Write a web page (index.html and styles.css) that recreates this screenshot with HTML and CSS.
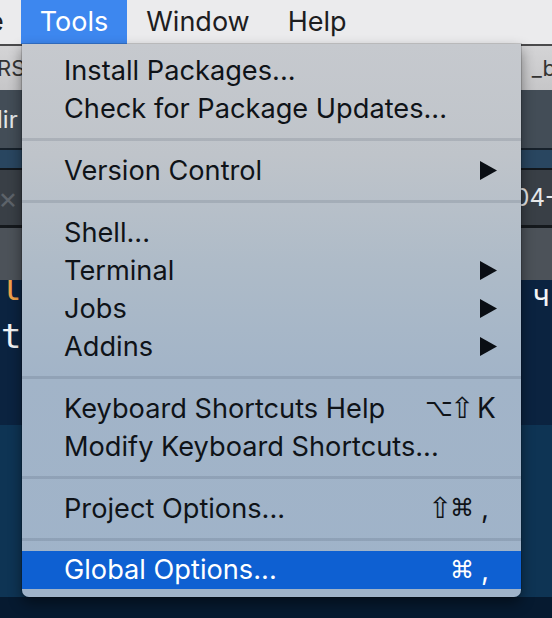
FILE: index.html
```html
<!DOCTYPE html>
<html>
<head>
<meta charset="utf-8">
<link rel="stylesheet" href="styles.css">
</head>
<body>
<div class="screen">
  <div class="menubar">
    <span class="mb-item mb-cut">e</span>
    <span class="mb-item mb-active">Tools</span>
    <span class="mb-item">Window</span>
    <span class="mb-item">Help</span>
  </div>
  <div class="bg">
    <div class="row r-line1"></div>
    <div class="row r-tabs"><span class="edge-l t-dark">RS</span><span class="edge-r t-dark">_b</span></div>
    <div class="row r-tool"><span class="edge-l t-light">lir</span></div>
    <div class="row r-line2"></div>
    <div class="row r-blue"></div>
    <div class="row r-line3"></div>
    <div class="row r-tab2"><span class="edge-l t-x">×</span><span class="edge-r t-light">04-</span></div>
    <div class="row r-line4"></div>
    <div class="row r-grey"></div>
    <div class="row r-code">
      <div class="code-l"><span class="c-orange">l</span><span class="c-white">t</span></div>
      <div class="code-r"><span class="c-white">ч</span></div>
    </div>
    <div class="row r-active"></div>
    <div class="row r-bottom"></div>
  </div>

  <div class="menu">
    <div class="item"><span class="label">Install Packages...</span></div>
    <div class="item"><span class="label">Check for Package Updates...</span></div>
    <div class="sep"></div>
    <div class="item"><span class="label">Version Control</span><svg class="arrow" viewBox="0 0 17 19"><polygon points="0,0 17,9.5 0,19"/></svg></div>
    <div class="sep"></div>
    <div class="item"><span class="label">Shell...</span></div>
    <div class="item"><span class="label">Terminal</span><svg class="arrow" viewBox="0 0 17 19"><polygon points="0,0 17,9.5 0,19"/></svg></div>
    <div class="item"><span class="label">Jobs</span><svg class="arrow" viewBox="0 0 17 19"><polygon points="0,0 17,9.5 0,19"/></svg></div>
    <div class="item"><span class="label">Addins</span><svg class="arrow" viewBox="0 0 17 19"><polygon points="0,0 17,9.5 0,19"/></svg></div>
    <div class="sep"></div>
    <div class="item"><span class="label">Keyboard Shortcuts Help</span><span class="sc"><span class="mods"><span class="m-opt">⌥</span><span class="m-shift">⇧</span></span><span class="key">K</span></span></div>
    <div class="item"><span class="label">Modify Keyboard Shortcuts...</span></div>
    <div class="sep"></div>
    <div class="item"><span class="label">Project Options...</span><span class="sc"><span class="mods"><span class="m-shift">⇧</span><span class="m-cmd">⌘</span></span><span class="key key-comma">,</span></span></div>
    <div class="sep"></div>
    <div class="item selected"><span class="label">Global Options...</span><span class="sc"><span class="mods"><span class="m-cmd">⌘</span></span><span class="key key-comma">,</span></span></div>
  </div>
</div>
</body>
</html>
```

FILE: styles.css
```css
* { box-sizing: border-box; }
html, body { margin: 0; padding: 0; }
body {
  width: 552px;
  height: 618px;
  overflow: hidden;
  background: #061a30;
  font-family: Inter, "Liberation Sans", sans-serif;
}
.screen {
  position: relative;
  width: 552px;
  height: 618px;
  overflow: hidden;
}
.menubar {
  height: 44px;
  background: #ebebed;
  display: flex;
  align-items: stretch;
  font-size: 27px;
  color: #1d1d1f;
}
.mb-item {
  display: flex;
  align-items: center;
  padding: 0 19px 2px 19px;
}
.mb-cut {
  margin-left: -12px;
  padding: 0 17px 2px 0;
}
.mb-active {
  background: #3d87ef;
  color: #fff;
}
.bg { display: flex; flex-direction: column; }
.row {
  display: flex;
  justify-content: space-between;
  align-items: center;
  overflow: hidden;
}
.r-line1 { height: 2px; background: #4a4a4c; }
.r-tabs { height: 44px; background: linear-gradient(#d4d4d6, #c6c6c8); font-size: 22px; }
.r-tool { height: 58px; background: #434d57; font-size: 24px; }
.r-line2 { height: 2px; background: #17212b; }
.r-blue { height: 18px; background: #294660; }
.r-line3 { height: 2px; background: #12171c; }
.r-tab2 { height: 55px; background: #393f46; font-size: 24px; }
.r-line4 { height: 3px; background: #15191d; }
.r-grey { height: 52px; background: #4c5259; }
.r-code { height: 145px; background: #0b2340; align-items: flex-start; }
.r-active { height: 172px; background: #0e3454; }
.r-bottom { height: 21px; background: #061a30; }

.edge-l { margin-left: -3px; }
.edge-r { margin-right: -4px; }
.t-dark { color: #333; }
.t-light { color: #e6e8ea; }
.t-x { color: #5d636a; margin-left: -2px; font-size: 30px; }

.code-l {
  display: flex;
  flex-direction: column;
  font-family: "DejaVu Sans Mono", monospace;
  font-size: 34px;
  line-height: 48px;
  margin-top: -16px;
  margin-left: 1px;
}
.code-r {
  font-family: "DejaVu Sans Mono", monospace;
  font-size: 30px;
  line-height: 30px;
  margin-top: 1px;
  margin-right: 2px;
}
.c-orange { color: #f0a24a; }
.c-white { color: #f2f4f6; }

.menu {
  position: absolute;
  left: 22px;
  top: 44px;
  width: 499px;
  height: 553px;
  padding: 8px 0;
  background: linear-gradient(#c6c9ce 0%, #bfc4ca 20%, #aebbc8 40%, #a2b4c8 60%, #9fb3c9 100%);
  border-radius: 0 0 7px 7px;
  box-shadow: 0 6px 14px rgba(0, 0, 0, 0.45), 0 0 0 1px rgba(0, 0, 0, 0.15);
  color: #0f1318;
  font-size: 27.2px;
  display: flex;
  flex-direction: column;
}
.item {
  height: 38px;
  display: flex;
  align-items: center;
  padding: 0 20px 0 42px;
}
.label { flex: 1; white-space: nowrap; }
.arrow {
  width: 17px;
  height: 19px;
  margin-right: 4px;
  fill: #0a0e14;
}
.sc {
  display: flex;
  align-items: center;
}
.mods {
  display: flex;
  align-items: center;
  font-family: "DejaVu Sans", sans-serif;
  font-size: 24px;
  line-height: 30px;
  margin-right: 5px;
}
.m-opt { display: inline-block; width: 21px; margin-right: 4px; }
.m-shift { display: inline-block; width: 20px; margin-right: 2px; font-size: 29px; text-align: center; overflow: visible; }
.m-cmd { display: inline-block; width: 22px; }
.key { width: 24px; font-family: Inter, "Liberation Sans", sans-serif; font-size: 28px; }
.key-comma { padding-left: 4px; }
.sep {
  height: 24px;
  display: flex;
  align-items: center;
}
.sep::before {
  content: "";
  display: block;
  width: 100%;
  height: 3px;
  background: rgba(40, 55, 80, 0.14);
}
.selected {
  background: #0e60d2;
  color: #fff;
}
```
